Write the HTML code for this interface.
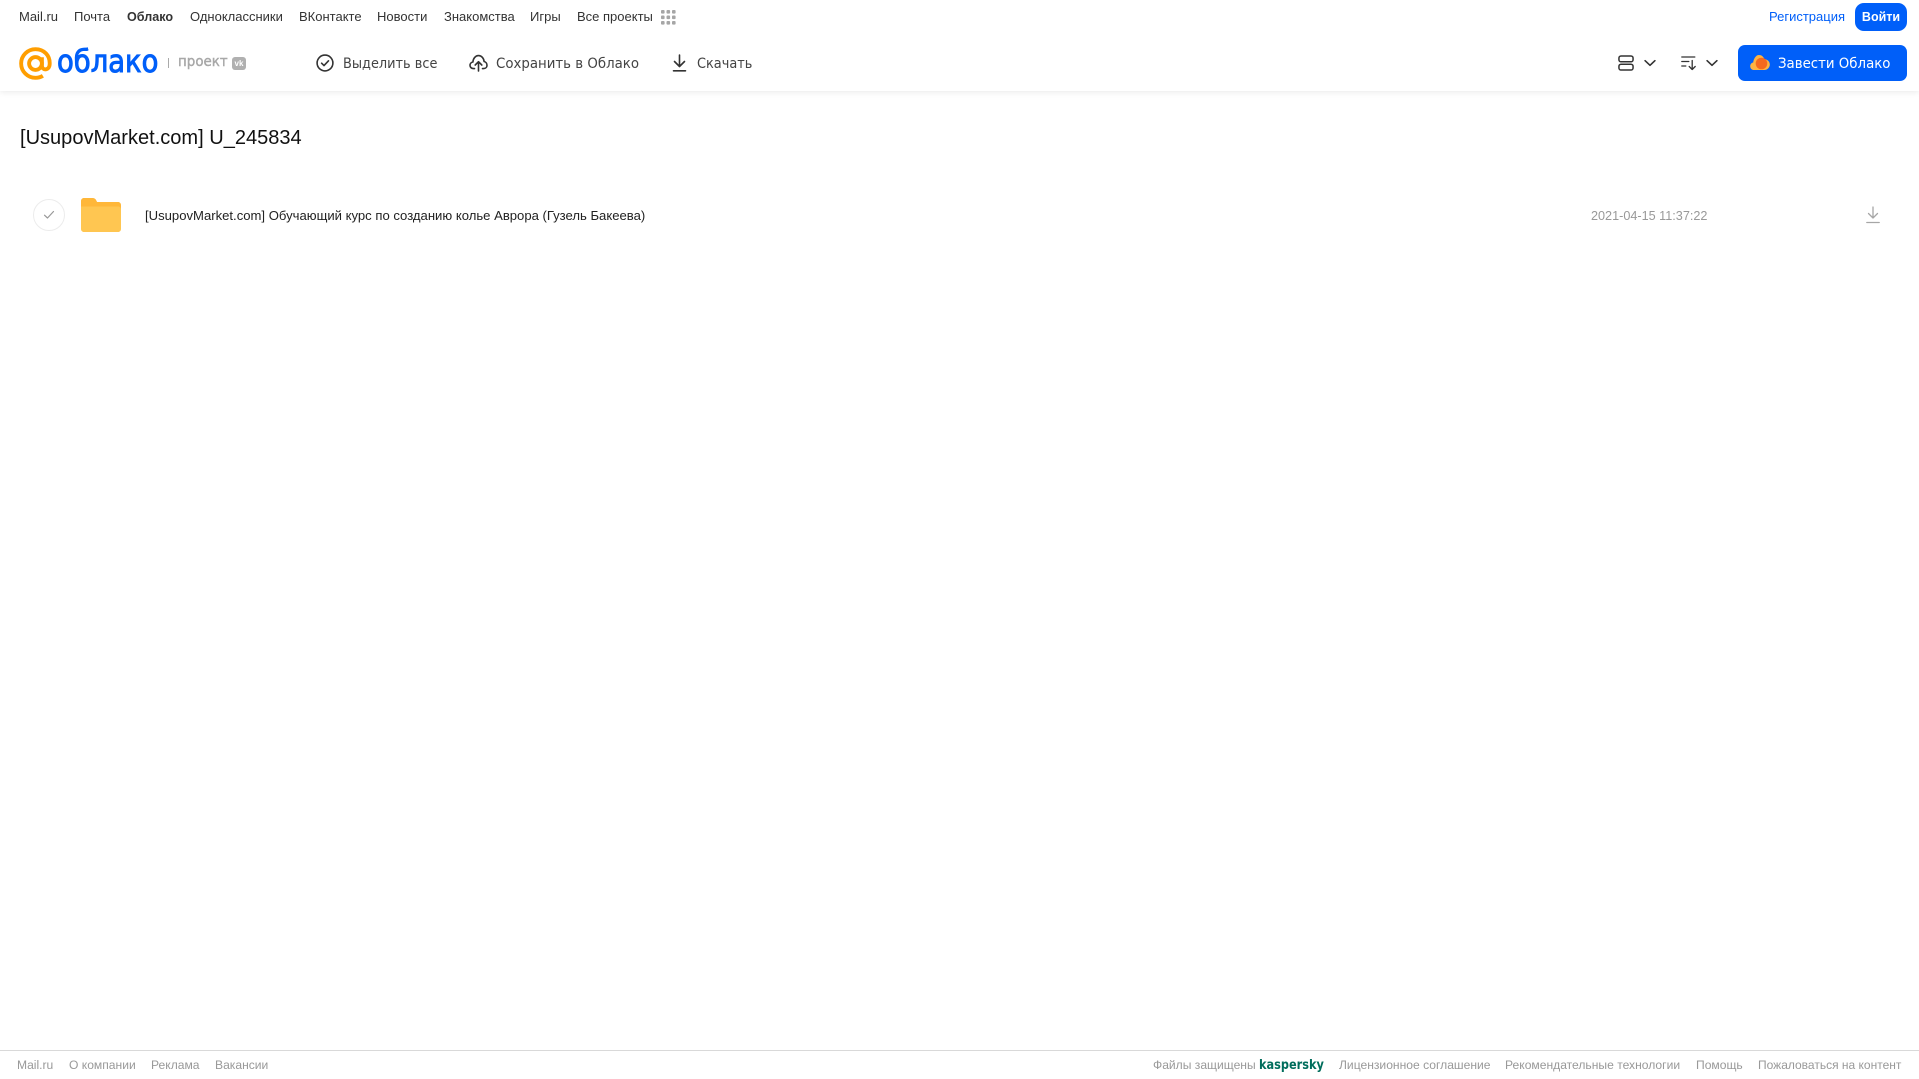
<!DOCTYPE html>
<html lang="ru">
<head>
<meta charset="utf-8">
<title>Облако</title>
<style>
html,body{margin:0;padding:0;background:#fff}
body{width:1919px;height:1079px;position:relative;overflow:hidden;font-family:"Liberation Sans",Arial,sans-serif}
.t{position:absolute;white-space:nowrap;line-height:16px}
.n{top:8.5px;font-size:13px;color:#333}
.a{top:55.5px;font-size:14.5px;color:#444;font-family:"DejaVu Sans","Liberation Sans",sans-serif;transform-origin:0 50%}
.f{top:1057px;font-size:12.1px;color:#999}
svg{position:absolute;display:block}
#head{position:absolute;left:0;top:0;width:1919px;height:91px;background:#fff;box-shadow:0 1px 6px rgba(0,0,0,.09)}
.btn{position:absolute;background:#005ff9;color:#fff;text-align:center;white-space:nowrap}
</style>
</head>
<body>
<div id="head"></div>

<span class="t n" style="left:19px">Mail.ru</span>
<span class="t n" style="left:74px">Почта</span>
<span class="t n" style="left:127px;font-weight:bold;font-size:12.6px">Облако</span>
<span class="t n" style="left:190px">Одноклассники</span>
<span class="t n" style="left:299px">ВКонтакте</span>
<span class="t n" style="left:377px">Новости</span>
<span class="t n" style="left:444px">Знакомства</span>
<span class="t n" style="left:530px">Игры</span>
<span class="t n" style="left:577px">Все проекты</span>
<svg style="left:661px;top:10px" width="15" height="15" viewBox="0 0 15 15" fill="#a6a6a6">
<rect x="0" y="0" width="3.6" height="3.6" rx="1"/><rect x="5.5" y="0" width="3.6" height="3.6" rx="1"/><rect x="11" y="0" width="3.6" height="3.6" rx="1"/>
<rect x="0" y="5.5" width="3.6" height="3.6" rx="1"/><rect x="5.5" y="5.5" width="3.6" height="3.6" rx="1"/><rect x="11" y="5.5" width="3.6" height="3.6" rx="1"/>
<rect x="0" y="11" width="3.6" height="3.6" rx="1"/><rect x="5.5" y="11" width="3.6" height="3.6" rx="1"/><rect x="11" y="11" width="3.6" height="3.6" rx="1"/>
</svg>

<span class="t n" style="left:1769px;color:#005ff9">Регистрация</span>
<div class="btn" style="left:1855px;top:3px;width:52px;height:28px;border-radius:9px;font-size:12.5px;font-weight:bold;line-height:28px">Войти</div>

<svg style="left:19px;top:47px" width="33" height="33" viewBox="0 0 34 34" fill="none" stroke="#ff9e00" stroke-width="4">
<circle cx="17" cy="17" r="6.6"/>
<path d="M23.6 10.5V19c0 5.6 7.6 5.6 8-1.2C32.2 8.6 25.6 2.2 17 2.2 8.8 2.2 2.2 8.8 2.2 17S8.8 31.8 17 31.8c3 0 5.5-.8 7.6-2.1"/>
</svg>
<span class="t" style="left:57px;top:44px;line-height:36px;font-size:31px;color:#005ff9;-webkit-text-stroke:1px #005ff9;font-family:'DejaVu Sans',sans-serif;transform-origin:0 50%;transform:scaleX(.885)">облако</span>
<div style="position:absolute;left:168px;top:58px;width:1px;height:10px;background:#aaa"></div>
<span class="t" style="left:178px;top:54px;font-size:14px;color:#a8a8a8;-webkit-text-stroke:.4px #a8a8a8;font-family:'DejaVu Sans',sans-serif;transform-origin:0 50%;transform:scaleX(.96)">проект</span>
<div style="position:absolute;left:232px;top:57px;width:14px;height:13px;background:#b0b0b0;border-radius:3px;color:#fff;font-size:8px;font-weight:bold;line-height:13px;text-align:center">vk</div>

<svg style="left:316px;top:54px" width="18" height="18" viewBox="0 0 18 18" fill="none" stroke="#333" stroke-width="1.6" stroke-linecap="round" stroke-linejoin="round">
<circle cx="9" cy="9" r="7.9"/><path d="M5.6 9.2l2.4 2.4 4.5-4.8"/>
</svg>
<span class="t a" style="left:343px;transform:scaleX(.89)">Выделить все</span>

<svg style="left:469px;top:54px" width="19" height="18" viewBox="0 0 19 18" fill="none" stroke="#333" stroke-width="1.6" stroke-linecap="round" stroke-linejoin="round">
<path d="M5.5 14.6H4.4C2.4 14.6 1 13.1 1 11.3c0-1.7 1.2-3 2.9-3.3C4.2 4.4 6.5 1.6 9.5 1.6c3 0 5.3 2.6 5.6 5.9 1.7.4 2.9 1.9 2.9 3.7 0 1.900-1.400 3.400-3.400 3.400h-1.100"/>
<path d="M9.5 17V8M6.200 11l3.300-3.300 3.300 3.300"/>
</svg>
<span class="t a" style="left:496px;transform:scaleX(.92)">Сохранить в Облако</span>

<svg style="left:672px;top:54px" width="15" height="18" viewBox="0 0 15 18" fill="none" stroke="#333" stroke-width="1.6" stroke-linecap="round" stroke-linejoin="round">
<path d="M7.500 1v11M2.500 7.500l5 5 5-5M1.500 16.800h12"/>
</svg>
<span class="t a" style="left:697px;transform:scaleX(.89)">Скачать</span>

<svg style="left:1618px;top:55px" width="16" height="16" viewBox="0 0 17 17" fill="none" stroke="#333" stroke-width="1.600">
<rect x="1" y="1" width="15" height="6.200" rx="2.200"/><rect x="1" y="9.800" width="15" height="6.200" rx="2.200"/>
</svg>
<svg style="left:1644px;top:59px" width="12" height="8" viewBox="0 0 13 8" fill="none" stroke="#333" stroke-width="1.700" stroke-linecap="round" stroke-linejoin="round"><path d="M1.200 1.500l5.300 5 5.300-5"/></svg>
<svg style="left:1681px;top:55px" width="16" height="16" viewBox="0 0 16 16" fill="none" stroke="#333" stroke-width="1.300" stroke-linecap="round" stroke-linejoin="round">
<path d="M.8 2h13M.8 6.500h7M.8 11h4M11.200 5.500v9M8.200 11.500l3 3 3-3"/>
</svg>
<svg style="left:1706px;top:59px" width="12" height="8" viewBox="0 0 13 8" fill="none" stroke="#333" stroke-width="1.700" stroke-linecap="round" stroke-linejoin="round"><path d="M1.200 1.500l5.300 5 5.300-5"/></svg>

<div class="btn" style="left:1738px;top:45px;width:169px;height:36px;border-radius:7px"></div>
<svg style="left:1750px;top:54px" width="20" height="17" viewBox="0 0 20 17">
<path fill="#ffb341" d="M4 16C1.800 16 .2 14.300.2 12.200c0-1.900 1.300-3.400 3-3.700C3.600 5 5.700 1 9 1c2.600 0 4.500 1.700 5.200 4C17.300 5.300 19.800 7.500 19.800 10.500c0 3-2.400 5.500-5.500 5.500z"/>
<circle cx="11.500" cy="9.500" r="5.800" fill="#f4691f"/>
</svg>
<span class="t" style="left:1778px;top:55.500px;font-size:14.500px;color:#fff;font-family:'DejaVu Sans',sans-serif;transform-origin:0 50%;transform:scaleX(.92)">Завести Облако</span>

<span class="t" style="left:20px;top:126px;line-height:24px;font-size:20.040px;color:#111">[UsupovMarket.com] U_245834</span>

<div style="position:absolute;left:33px;top:199px;width:30px;height:30px;border:1px solid #ececec;border-radius:50%"></div>
<svg style="left:43px;top:210px" width="12" height="10" viewBox="0 0 12 10" fill="none" stroke="#999" stroke-width="1.200" stroke-linecap="round" stroke-linejoin="round"><path d="M1.500 5.200l3 2.800 6-6.500"/></svg>

<svg style="left:81px;top:198px" width="40" height="34" viewBox="0 0 41 34" preserveAspectRatio="none">
<path fill="#ffb739" d="M0 3C0 1.300 1.300 0 3 0h9c1.600 0 2.500.7 3.300 1.800L16.500 4H38c1.700 0 3 1.300 3 3v5H0z"/>
<path fill="#ffc651" d="M0 8.500h38c1.700 0 3 1.300 3 3V31c0 1.700-1.300 3-3 3H3c-1.700 0-3-1.300-3-3z"/>
</svg>

<span class="t" style="left:145px;top:207.500px;font-size:13.100px;color:#222">[UsupovMarket.com] Обучающий курс по созданию колье Аврора (Гузель Бакеева)</span>
<span class="t" style="left:1591px;top:207.500px;font-size:12.650px;color:#999">2021-04-15 11:37:22</span>
<svg style="left:1866px;top:206px" width="14" height="18" viewBox="0 0 14 18" fill="none" stroke="#a6a6a6" stroke-width="1.300" stroke-linecap="round" stroke-linejoin="round">
<path d="M7 1v11M2.500 7.500L7 12l4.500-4.500M.8 16.500h12.400"/>
</svg>

<div style="position:absolute;left:0;top:1050px;width:1919px;height:1px;background:#d9d9d9"></div>
<span class="t f" style="left:17px">Mail.ru</span>
<span class="t f" style="left:69px">О компании</span>
<span class="t f" style="left:151px">Реклама</span>
<span class="t f" style="left:215px">Вакансии</span>
<span class="t f" style="left:1153px">Файлы защищены</span>
<span class="t f" style="left:1259px;top:1058px;font-weight:bold;color:#006d5c;font-size:13px;font-family:'DejaVu Sans',sans-serif;transform-origin:0 50%;transform:scaleX(.87)">kaspersky</span>
<span class="t f" style="left:1339px">Лицензионное соглашение</span>
<span class="t f" style="left:1505px">Рекомендательные технологии</span>
<span class="t f" style="left:1696px">Помощь</span>
<span class="t f" style="left:1758px;font-size:12px">Пожаловаться на контент</span>
</body>
</html>
